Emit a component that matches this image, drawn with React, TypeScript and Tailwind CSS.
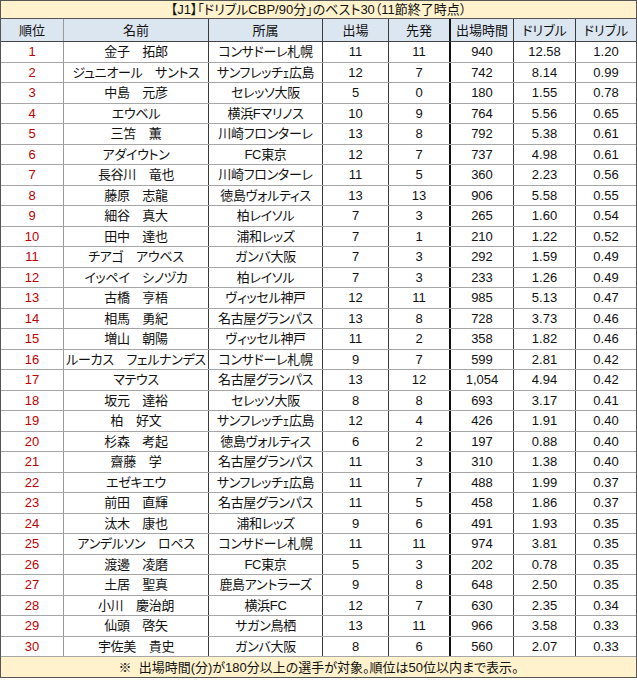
import React from "react";

type Row = [string, string, string, string, string, string, string];

const rows: Row[] = [
  ["金子　拓郎", "コンサドーレ札幌", "11", "11", "940", "12.58", "1.20"],
  ["ジュニオール　サントス", "サンフレッチｪ広島", "12", "7", "742", "8.14", "0.99"],
  ["中島　元彦", "セレッソ大阪", "5", "0", "180", "1.55", "0.78"],
  ["エウベル", "横浜Fマリノス", "10", "9", "764", "5.56", "0.65"],
  ["三笘　薫", "川崎フロンターレ", "13", "8", "792", "5.38", "0.61"],
  ["アダイウトン", "FC東京", "12", "7", "737", "4.98", "0.61"],
  ["長谷川　竜也", "川崎フロンターレ", "11", "5", "360", "2.23", "0.56"],
  ["藤原　志龍", "徳島ヴォルティス", "13", "13", "906", "5.58", "0.55"],
  ["細谷　真大", "柏レイソル", "7", "3", "265", "1.60", "0.54"],
  ["田中　達也", "浦和レッズ", "7", "1", "210", "1.22", "0.52"],
  ["チアゴ　アウベス", "ガンバ大阪", "7", "3", "292", "1.59", "0.49"],
  ["イッペイ　シノヅカ", "柏レイソル", "7", "3", "233", "1.26", "0.49"],
  ["古橋　亨梧", "ヴィッセル神戸", "12", "11", "985", "5.13", "0.47"],
  ["相馬　勇紀", "名古屋グランパス", "13", "8", "728", "3.73", "0.46"],
  ["増山　朝陽", "ヴィッセル神戸", "11", "2", "358", "1.82", "0.46"],
  ["ルーカス　フェルナンデス", "コンサドーレ札幌", "9", "7", "599", "2.81", "0.42"],
  ["マテウス", "名古屋グランパス", "13", "12", "1,054", "4.94", "0.42"],
  ["坂元　達裕", "セレッソ大阪", "8", "8", "693", "3.17", "0.41"],
  ["柏　好文", "サンフレッチｪ広島", "12", "4", "426", "1.91", "0.40"],
  ["杉森　考起", "徳島ヴォルティス", "6", "2", "197", "0.88", "0.40"],
  ["齋藤　学", "名古屋グランパス", "11", "3", "310", "1.38", "0.40"],
  ["エゼキエウ", "サンフレッチｪ広島", "11", "7", "488", "1.99", "0.37"],
  ["前田　直輝", "名古屋グランパス", "11", "5", "458", "1.86", "0.37"],
  ["汰木　康也", "浦和レッズ", "9", "6", "491", "1.93", "0.35"],
  ["アンデルソン　ロペス", "コンサドーレ札幌", "11", "11", "974", "3.81", "0.35"],
  ["渡邊　凌磨", "FC東京", "5", "3", "202", "0.78", "0.35"],
  ["土居　聖真", "鹿島アントラーズ", "9", "8", "648", "2.50", "0.35"],
  ["小川　慶治朗", "横浜FC", "12", "7", "630", "2.35", "0.34"],
  ["仙頭　啓矢", "サガン鳥栖", "13", "11", "966", "3.58", "0.33"],
  ["宇佐美　貴史", "ガンバ大阪", "8", "6", "560", "2.07", "0.33"],
];

const headers = ["順位", "名前", "所属", "出場", "先発", "出場時間", "ドリブル", "ドリブル"];

// right border per column: rank col is lighter, 先発 gets the heavy rule
const colBorder = [
  "border-r border-r-[#9a9a9a]",
  "border-r border-r-[#3a3a3a]",
  "border-r border-r-[#3a3a3a]",
  "border-r border-r-[#3a3a3a]",
  "border-r-2 border-r-[#111]",
  "border-r border-r-[#3a3a3a]",
  "border-r border-r-[#3a3a3a]",
  "",
];

const gridCols = "grid grid-cols-[63px_145px_114px_66px_62px_63px_62px_60px]";

export default function App() {
  return (
    <div className="w-[637px] h-[680px] bg-white font-['Liberation_Sans','Noto_Sans_CJK_JP',sans-serif] text-[13px] text-[#111] [font-feature-settings:'palt']">
      <div className="border border-[#555] border-b-0">
        <div className="h-[18px] bg-[#fff2cc] flex items-center justify-center border-b border-[#555] leading-none">
          【J1】「ドリブルCBP/90分」のベスト30（11節終了時点）
        </div>

        <div className={`${gridCols} h-[23px] bg-[#dce6f1] border-b border-[#444]`}>
          {headers.map((h, i) => (
            <div key={i} className={`flex items-center justify-center leading-none ${colBorder[i]}`}>
              {h}
            </div>
          ))}
        </div>

        {rows.map((r, idx) => (
          <div key={idx} className={`${gridCols} h-[20.5px] border-b border-[#a6a6a6]`}>
            <div className={`flex items-center justify-center leading-none text-[#c00000] ${colBorder[0]}`}>
              {idx + 1}
            </div>
            {r.map((c, j) => (
              <div
                key={j}
                className={`flex items-center justify-center leading-none whitespace-nowrap ${colBorder[j + 1]} ${
                  j < 2 ? "tracking-[-0.3px]" : ""
                }`}
              >
                {c}
              </div>
            ))}
          </div>
        ))}

        <div className="h-[21px] bg-[#fff2cc] flex items-center justify-center border-b border-[#555] leading-none">
          ※&nbsp;&nbsp;出場時間(分)が180分以上の選手が対象。順位は50位以内まで表示。
        </div>
      </div>
    </div>
  );
}
